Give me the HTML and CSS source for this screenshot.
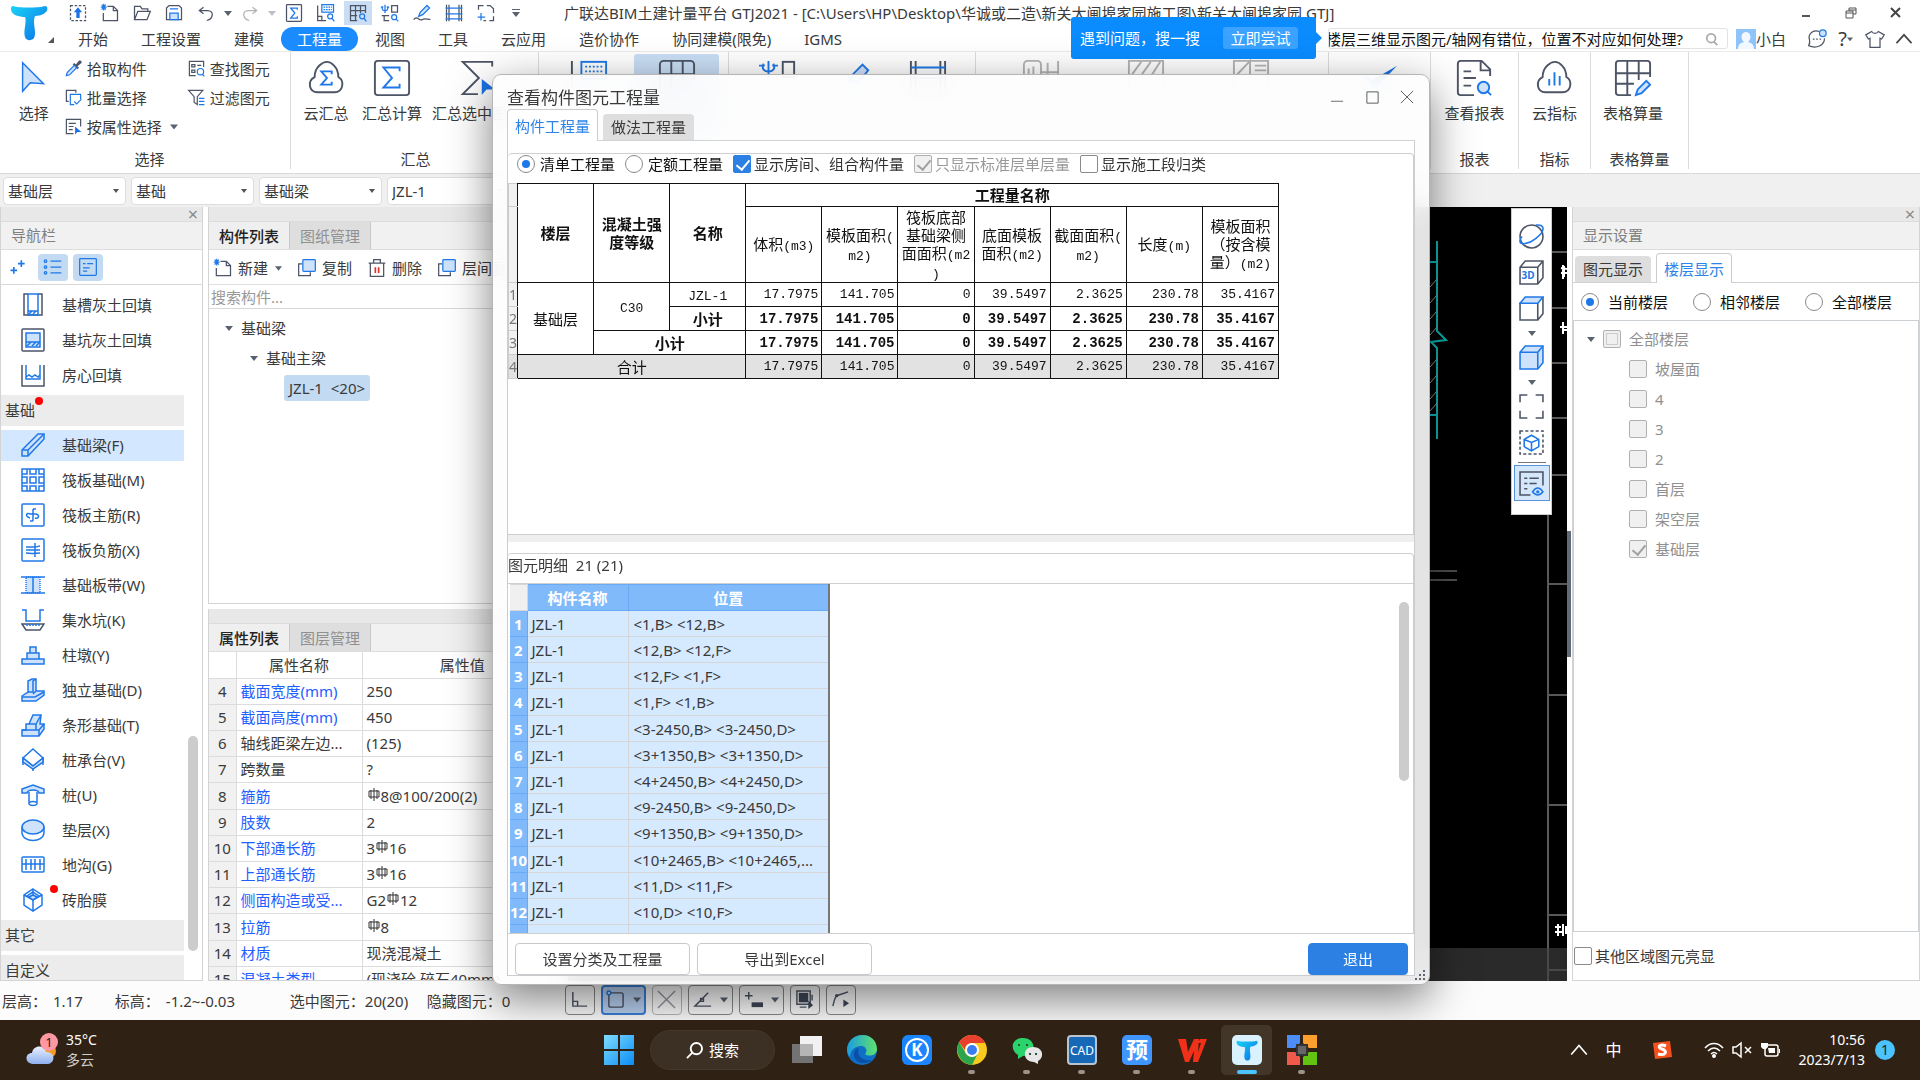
FILE: index.html
```html
<!DOCTYPE html>
<html lang="zh-CN">
<head>
<meta charset="utf-8">
<title>广联达BIM土建计量平台 GTJ2021</title>
<link rel="stylesheet" href="styles.css">
</head>
<body>
<svg class="defs" aria-hidden="true">
  <defs>
    <linearGradient id="gT" x1="0" y1="0" x2="1" y2="1"><stop offset="0" stop-color="#19d3f5"/><stop offset="1" stop-color="#0a6fe8"/></linearGradient>
    <linearGradient id="gWin" x1="0" y1="0" x2="1" y2="1"><stop offset="0" stop-color="#7fdcff"/><stop offset="1" stop-color="#0a8cf5"/></linearGradient>
    <linearGradient id="gEdge" x1="0" y1="0" x2="1" y2="0"><stop offset="0" stop-color="#1b9de2"/><stop offset="1" stop-color="#5fe26a"/></linearGradient>
    <linearGradient id="gCloud" x1="0" y1="0" x2="0" y2="1"><stop offset="0" stop-color="#eaf1ff"/><stop offset="1" stop-color="#8fb0ef"/></linearGradient>
  </defs>
  <symbol id="tlogo" viewBox="0 0 38 38"><path d="M3 3c5 2 26 2 32 0 3 0 3 4 1 6-3 3-8 4-11 4-3 6 2 17-1 22-2 3-8 3-9-1-2-6 2-15 0-20C9 14 2 12 1 7c0-2 0-4 2-4z" fill="url(#gT)"/></symbol>
  <symbol id="down" viewBox="0 0 8 8"><path d="M0 2h8L4 7z" fill="#5a6270"/></symbol>
  <symbol id="downbar" viewBox="0 0 8 10"><path d="M0 1h8v1H0zM0 4h8L4 9z" fill="#5a6270"/></symbol>
  <symbol id="upload" viewBox="0 0 24 24"><rect class="d" x="3" y="3" width="18" height="18" stroke-dasharray="3 2"/><path class="bf" d="M12 5l5 6h-3v7h-4v-7H7z"/></symbol>
  <symbol id="newfile" viewBox="0 0 24 24"><path class="d" d="M9 4h7l5 5v12H4v-9"/><path class="d" d="M16 4v5h5"/><path class="b" d="M2 2l5 6M7 2L2 8M1 5h7M4.500 1v8"/></symbol>
  <symbol id="folder" viewBox="0 0 24 24"><path class="d" d="M3 20V4h7l2 3h7v3M3 20l4-10h15l-4 10z"/></symbol>
  <symbol id="save" viewBox="0 0 24 24"><path class="d" d="M3 6l3-3h12l3 3v14H3z"/><path class="b l" d="M7 20v-8h10v8zM7 7h10"/></symbol>
  <symbol id="undo" viewBox="0 0 24 24"><path class="d" d="M9 5L4 9l5 4M4 9h10c8 0 7 10-1 12"/></symbol>
  <symbol id="redo" viewBox="0 0 24 24"><path class="g" d="M15 5l5 4-5 4M20 9H10C2 9 3 19 11 21"/></symbol>
  <symbol id="sigma" viewBox="0 0 24 24"><rect class="d" x="3" y="2" width="18" height="20" rx="1"/><path class="b" d="M16 8V6H8l5 6-5 6h8v-2"/></symbol>
  <symbol id="calcview" viewBox="0 0 24 24"><path class="d" d="M2 3v18h10M2 16h5v5"/><rect class="b" x="7" y="2" width="14" height="9"/><path class="b" d="M9 5h10M9 8h10" stroke-dasharray="2 1"/><circle class="b" cx="17" cy="16" r="3"/><path class="b" d="M19 18l3 4"/></symbol>
  <symbol id="gridview" viewBox="0 0 24 24"><path class="d" d="M3 7V3h18v9M3 7v14h8M3 9h18M3 15h8M9 3v18M15 3v9"/><circle class="b" cx="17" cy="16" r="3"/><path class="b" d="M19 18l3 4"/></symbol>
  <symbol id="rebarview" viewBox="0 0 24 24"><path class="b" d="M6 2v10M3 4c-3 7 9 7 6 0M1 5h3M8 5h3"/><path class="d" d="M14 11V3h7v8zM2 15h9M5 15v7M5 21h6"/><circle class="b" cx="17" cy="17" r="3"/><path class="b" d="M19 19l3 3"/></symbol>
  <symbol id="pen" viewBox="0 0 24 24"><path class="b l" d="M8 16l2-5 8-8 3 3-8 8z"/><path class="d" d="M2 20c4-6 6 2 10 0 3-2 6-1 10 0"/></symbol>
  <symbol id="ladder" viewBox="0 0 24 24"><path class="d" d="M3 2v20M21 2v20M6 2v20M18 2v20"/><path class="b" d="M2 6h20M2 13h20M2 19h20"/></symbol>
  <symbol id="pageadd" viewBox="0 0 24 24"><path class="d" d="M3 8V3h6M13 3h4l4 4v5M21 16v5h-5M12 21H9"/><path class="b" d="M6 12v9M2 17h9"/></symbol>
  <symbol id="cursor" viewBox="0 0 32 40"><path class="b l" stroke-width="2" d="M4 4v30l8-9 14 1z"/></symbol>
  <symbol id="picker" viewBox="0 0 24 24"><path fill="#4c5465" d="M13 5l2 2 4-5c3-1 4 2 3 3l-5 4 2 2-2 2-6-6z"/><path class="b l" d="M13 8l-9 9-1 4 4-1 9-9z"/></symbol>
  <symbol id="batch" viewBox="0 0 24 24"><path class="d" d="M6 17H3V3h12v3"/><path class="b" d="M21 14V8H8v13h5M13 17l3 3 6-6"/></symbol>
  <symbol id="attr" viewBox="0 0 24 24"><path class="d" d="M21 12V3H3v18h9M6 8h9M6 12h6M6 16h5"/><path class="bf" d="M14 12v10l3-3h5z"/></symbol>
  <symbol id="find" viewBox="0 0 24 24"><path class="d" d="M21 10V3H3v18h8M6 7h4v3H6zM13 8h5M6 14h4v3H6z"/><circle class="b" cx="17" cy="16" r="4"/><path class="b" d="M19 19l3 3"/></symbol>
  <symbol id="filter" viewBox="0 0 24 24"><path class="d" d="M2 3h18l-7 8v10l-4-3v-7z"/><path class="b" d="M15 13h7M15 17h7M15 21h7"/></symbol>
  <symbol id="cloudsum" viewBox="0 0 40 40"><path class="d w" d="M11 35c-9 0-11-12-3-16C8 8 17 3 21 3s12 5 12 16c7 4 5 16-4 16z"/><path class="b w" d="M26 16v-3H15l6 7-6 7h11v-3"/></symbol>
  <symbol id="cloudbars" viewBox="0 0 40 40"><path class="d w" d="M11 35c-9 0-11-12-3-16C8 8 17 3 21 3s12 5 12 16c7 4 5 16-4 16z"/><path class="b w" d="M15 21v7M20.500 14v14M26 18v10"/></symbol>
  <symbol id="sumcalc" viewBox="0 0 40 40"><rect class="d w" x="2" y="2" width="36" height="36" rx="3"/><path class="b w" d="M28 13V9H11l9 11-9 10h17v-4"/></symbol>
  <symbol id="sumsel" viewBox="0 0 40 40"><path class="d w" d="M36 8V3H5l17 17L5 37h16"/><path class="bf" d="M25 21v17l5-6h9z"/></symbol>
  <symbol id="report" viewBox="0 0 40 40"><path class="d w" d="M20 38H6a3 3 0 0 1-3-3V5a3 3 0 0 1 3-3h22l9 9v7M27 2v10h10M9 13h8M9 20h13M9 28h8"/><circle class="b w l" cx="30" cy="30" r="6"/><path class="b w" d="M34 34l4 4"/></symbol>
  <symbol id="tablepen" viewBox="0 0 40 40"><path class="d w" d="M18 38H5a3 3 0 0 1-3-3V5a3 3 0 0 1 3-3h30a3 3 0 0 1 3 3v14M2 15h36M2 26h19M14 2v36M26 2v20"/><path class="b w l" d="M23 38l2-6 9-9 4 4-9 9z"/></symbol>
  <symbol id="kbig" viewBox="0 0 40 40"><path class="d w" d="M2 2v36h16"/><rect class="b w" x="12" y="3" width="26" height="18"/><path class="b w" d="M16 8h19M16 13h19M16 18h19" stroke-dasharray="2 2"/></symbol>
  <symbol id="gbig" viewBox="0 0 40 40"><path class="d w" d="M38 22V6a4 4 0 0 0-4-4H6a4 4 0 0 0-4 4v32M2 16h36M14 2v36M26 2v20"/></symbol>
  <symbol id="rbig" viewBox="0 0 40 40"><path class="b w" d="M10 2v18M5 5c-6 11 16 11 10 0M0 7h6M14 7h6"/><rect class="d w" x="25" y="3" width="12" height="16"/></symbol>
  <symbol id="pbig" viewBox="0 0 40 40"><path class="b w l" d="M16 24l4-8 10-10 6 6-10 12z"/></symbol>
  <symbol id="lbig" viewBox="0 0 40 40"><path class="d w" d="M2 2v36M38 2v36M7 2v36M33 2v36"/><path class="b w" d="M2 9h36M2 20h36"/></symbol>
  <symbol id="grey1" viewBox="0 0 40 40"><path class="g w" d="M2 20V6a4 4 0 0 1 4-4h10a4 4 0 0 1 4 4v14M7 20V10M12 20V8M20 14h18M27 4v16M38 2v18"/></symbol>
  <symbol id="grey2" viewBox="0 0 40 40"><path class="g w" d="M2 38V2h36v36M4 18L15 3M13 20L25 3M24 20L35 3"/></symbol>
  <symbol id="grey3" viewBox="0 0 40 40"><path class="g w" d="M2 38V2h36v36M2 20L19 2v18M24 7h12M24 12h12M24 17h12"/></symbol>
  <symbol id="check" viewBox="0 0 40 40"><path class="bf" d="M4 18l8 4L38 7 14 32z"/></symbol>
  <symbol id="sparkle" viewBox="0 0 24 24"><path class="b w" d="M16 4v8M12 8h8M7 12v8M3 16h8"/></symbol>
  <symbol id="list" viewBox="0 0 24 24"><path class="b" d="M9 5h13M9 12h13M9 19h13"/><circle class="b" cx="3" cy="5" r="1.500"/><circle class="b" cx="3" cy="12" r="1.500"/><circle class="b" cx="3" cy="19" r="1.500"/></symbol>
  <symbol id="card" viewBox="0 0 24 24"><rect class="b" x="2" y="2" width="20" height="20" rx="1"/><path class="b" d="M6 8h3M11 8h7M6 13h8M6 17h5"/></symbol>
  <symbol id="copy" viewBox="0 0 24 24"><path class="d" d="M6 7H2v14h14v-4"/><rect class="b l" x="7" y="2" width="15" height="14" rx="1"/></symbol>
  <symbol id="trash" viewBox="0 0 24 24"><path class="d" d="M2 6h20M8 6V2h8v4M4 6v16h16V6"/><path d="M10 11v7M14 11v7" stroke="#e03030" stroke-width="2"/></symbol>
  <symbol id="n1" viewBox="0 0 24 24"><path class="d" d="M7 1H3v21h18V1h-4"/><path class="b" d="M7 1h10v21H7z"/><path class="b" d="M7 18h10M8 21l3-3M12 21l3-3"/></symbol>
  <symbol id="n2" viewBox="0 0 24 24"><rect class="d" x="1" y="1" width="22" height="22" rx="1"/><path class="b l" d="M5 5h14v14H5z"/><path class="b" d="M5 14h14M6 18l4-4M11 18l4-4M15 18l4-4"/></symbol>
  <symbol id="n3" viewBox="0 0 24 24"><path class="d" d="M1 2v21h22V2"/><path class="b" d="M5 2v14h14V2"/><path class="b" d="M5 14l3-2 3 2 3-2 3 2 2-2"/></symbol>
  <symbol id="n4" viewBox="0 0 24 24"><path class="b l" d="M1 17L17 1h6v5L7 23H1z"/><path class="b" d="M1 17h6v6M7 17L23 1"/></symbol>
  <symbol id="n5" viewBox="0 0 24 24"><path class="b" d="M1 1h22v22H1zM6 1v5H1M9 1v5h6V1M18 1v5h5M1 9h5v6H1M9 9h6v6H9zM23 9h-5v6h5M1 18h5v5M9 23v-5h6v5M18 23v-5h5"/></symbol>
  <symbol id="n6" viewBox="0 0 24 24"><rect class="b" x="1" y="1" width="22" height="22" rx="1"/><path class="b" d="M12 6v12M9 18h3M9 15c-6-2-3-6 0-4h6c4 1 3 5-1 4M12 6h3"/></symbol>
  <symbol id="n7" viewBox="0 0 24 24"><rect class="b" x="1" y="1" width="22" height="22" rx="1"/><path class="b" d="M5 9h9c3 0 3-1 5-1M5 12h14M5 15c4 0 6 1 14 0M14 5v14"/></symbol>
  <symbol id="n8" viewBox="0 0 24 24"><path class="b l" d="M5 4h14v16H5z" stroke-dasharray="1 1"/><path class="b" d="M0 4h24M0 20h24M12 4v16"/></symbol>
  <symbol id="n9" viewBox="0 0 24 24"><path class="b" d="M1 2h4v11h14V2h4"/><path class="d" d="M1 16l4 6h14l4-6z"/><path class="b" d="M5 17h14" stroke-dasharray="2 1"/></symbol>
  <symbol id="n10" viewBox="0 0 24 24"><path class="b l" d="M9 4h6v6H9zM6 10h12v6H6zM1 16h22v5H1z"/></symbol>
  <symbol id="n11" viewBox="0 0 24 24"><path class="b l" d="M1 18l6-4V3l4-2h4v12h8v4l-8 6H1z"/><path class="b" d="M7 14h5V3l3-2M15 13l-3 3M1 19h13l9-5"/></symbol>
  <symbol id="n12" viewBox="0 0 24 24"><path class="b l" d="M1 17h4v-6h3l4-9h8l-1 9h4v5l-5 7H1z"/><path class="b" d="M1 17h17v6M5 17h10v-6H8M15 11l5-9M18 17l5-6"/></symbol>
  <symbol id="n13" viewBox="0 0 24 24"><path class="b" d="M12 1l10 9-10 8-10-8zM2 10v7M22 10v7M12 18v5"/><path class="b l" d="M2 10l10 8 10-8v4l-10 7-10-7z"/></symbol>
  <symbol id="n14" viewBox="0 0 24 24"><path class="b l" d="M1 6l11-4 11 4v4h-5c-1-4-11-4-12 0H1z"/><path class="b" d="M8 9v12c1 2 7 2 8 0V9M8 20c1-2 7-2 8 0"/></symbol>
  <symbol id="n15" viewBox="0 0 24 24"><ellipse class="b l" cx="12" cy="9" rx="11" ry="7"/><path class="b" d="M1 9v6c1 10 21 10 22 0V9"/></symbol>
  <symbol id="n16" viewBox="0 0 24 24"><rect class="b" x="1" y="4" width="22" height="15" rx="1"/><path class="b" d="M1 11h22M5 6v11M10 6v11M14 6v11M19 6v11"/></symbol>
  <symbol id="n17" viewBox="0 0 24 24"><path class="b" d="M12 1l9 6v10l-9 6-9-6V7zM12 12v11"/><path class="b l" d="M12 4l6 4-6 4-6-4z"/><path class="b" d="M3 7l9 5 9-5M12 1v6l-4 2M12 7l4 2"/></symbol>
  <symbol id="rebar" viewBox="0 0 14 14"><path d="M7 0v13M4 2v9M10 2v9M2 3h10v6H2z" fill="none" stroke="#333"/></symbol>
  <symbol id="orbit" viewBox="0 0 24 24"><circle class="d" cx="12" cy="12" r="11"/><path class="b" d="M16 1c10-1 9 6 0 13-6 5-16 7-15 2 0-2 1-3 2-4"/></symbol>
  <symbol id="cube" viewBox="0 0 24 24"><path class="d" d="M1 7l5-6h17v16l-5 6H1zM1 7h17v16M18 7l5-6"/></symbol>
  <symbol id="cubetop" viewBox="0 0 24 24"><path class="d" d="M1 7h17v16H1zM18 23l5-6V1"/><path class="b l" d="M1 7l5-6h17l-5 6z"/></symbol>
  <symbol id="cubeblue" viewBox="0 0 24 24"><path class="b l" d="M1 7l5-6h17v16l-5 6H1z"/><path class="b" d="M1 7h17v16M18 7l5-6"/></symbol>
  <symbol id="bracket" viewBox="0 0 24 24"><path class="d" d="M1 8V1h7M16 1h7v7M23 16v7h-7M8 23H1v-7"/></symbol>
  <symbol id="dashcube" viewBox="0 0 24 24"><rect class="d" x="1" y="1" width="22" height="22" stroke-dasharray="3 2"/><path class="b" d="M12 5l7 4v7l-7 4-7-4V9zM5 9l7 3 7-3M12 12v8"/></symbol>
  <symbol id="listeye" viewBox="0 0 24 24"><path class="d" d="M23 14V1H1v22h10M5 7h3M10 7h9M5 12h3M10 12h7M5 17h3"/><path class="b" d="M13 20c3-5 7-5 10 0-3 4-7 4-10 0z"/><circle class="bf" cx="18" cy="20" r="1.500"/></symbol>
</svg>

<div class="app">
  <header class="head">
    <a class="logo" href="#"><svg width="38" height="38"><use href="#tlogo"/></svg><i></i></a>
    <div class="head-main">
      <div class="titlebar">
        <button class="q"><svg><use href="#upload"/></svg></button>
        <button class="q"><svg><use href="#newfile"/></svg></button>
        <button class="q"><svg><use href="#folder"/></svg></button>
        <button class="q"><svg><use href="#save"/></svg></button>
        <button class="q"><svg><use href="#undo"/></svg></button>
        <button class="qd"><svg><use href="#down"/></svg></button>
        <button class="q"><svg><use href="#redo"/></svg></button>
        <button class="qd pale"><svg><use href="#down"/></svg></button>
        <button class="q"><svg><use href="#sigma"/></svg></button>
        <button class="q"><svg><use href="#calcview"/></svg></button>
        <button class="q on"><svg><use href="#gridview"/></svg></button>
        <button class="q"><svg><use href="#rebarview"/></svg></button>
        <button class="q"><svg><use href="#pen"/></svg></button>
        <button class="q"><svg><use href="#ladder"/></svg></button>
        <button class="q"><svg><use href="#pageadd"/></svg></button>
        <button class="qd more"><svg><use href="#downbar"/></svg></button>
        <h1>广联达BIM土建计量平台 GTJ2021 - [C:\Users\HP\Desktop\华诚或二造\新关大闸埠家园施工图\新关大闸埠家园.GTJ]</h1>
        <div class="winbtns">
          <button><svg viewBox="0 0 14 14"><path d="M3 9h8v2H3z" fill="#555"/></svg></button>
          <button><svg viewBox="0 0 14 14"><path d="M2 5h7v7H2zM2 7h7M5 5V2h7v6H9M5 4h7" fill="none" stroke="#555"/></svg></button>
          <button><svg viewBox="0 0 14 14"><path d="M2 2l9 9M11 2l-9 9" stroke="#444" stroke-width="2"/></svg></button>
        </div>
      </div>
      <nav class="menu">
        <a href="#">开始</a><a href="#">工程设置</a><a href="#">建模</a><a href="#" class="on">工程量</a><a href="#">视图</a><a href="#">工具</a><a href="#">云应用</a><a href="#">造价协作</a><a href="#">协同建模(限免)</a><a href="#">IGMS</a>
        <div class="menu-right">
          <label class="ask"><input type="text" aria-label="搜索问题" value="楼层三维显示图元/轴网有错位，位置不对应如何处理?"><svg viewBox="0 0 16 16"><circle cx="7" cy="7" r="5" fill="none" stroke="#aaa" stroke-width="2"/><path d="M10 11l4 4" stroke="#aaa" stroke-width="2"/></svg></label>
          <svg class="avatar" viewBox="0 0 20 20"><rect width="20" height="20" fill="#8fc4fb"/><path d="M2 20c0-5 3-6 6-7-4-3-3-10 2-10s6 7 2 10c3 1 6 2 6 7z" fill="#f2f8ff"/></svg>
          <span class="user">小白</span>
          <button class="mi"><svg viewBox="0 0 24 24"><path class="d" d="M15 3C6 0 1 7 3 13c1 3 0 5-1 7 9 4 19 0 19-9"/><circle class="b l" cx="19" cy="5" r="4"/><path class="d" d="M7 12h2M11 12h2M15 12h2" stroke-width="2"/></svg></button>
          <button class="mi help">?<svg class="tiny"><use href="#down"/></svg></button>
          <button class="mi"><svg viewBox="0 0 24 24"><path class="d" d="M8 3L1 7l3 5 2-1v11h12V11l2 1 3-5-7-4c-2 3-6 3-8 0z"/></svg></button>
          <button class="mi"><svg viewBox="0 0 24 24"><path d="M3 17l9-10 9 10" fill="none" stroke="#444" stroke-width="2"/></svg></button>
        </div>
      </nav>
    </div>
    <div class="tip"><span>遇到问题，搜一搜</span><button>立即尝试</button></div>
  </header>

  <section class="ribbon">
    <div class="grp g-select">
      <div class="tools">
        <button class="big"><svg><use href="#cursor"/></svg>选择</button>
        <div class="stack"><button><svg><use href="#picker"/></svg>拾取构件</button><button><svg><use href="#batch"/></svg>批量选择</button><button><svg><use href="#attr"/></svg>按属性选择<svg class="tiny"><use href="#down"/></svg></button></div>
        <div class="stack"><button><svg><use href="#find"/></svg>查找图元</button><button><svg><use href="#filter"/></svg>过滤图元</button></div>
      </div>
      <footer>选择</footer>
    </div>
    <div class="grp g-sum">
      <div class="tools"><button class="big"><svg><use href="#cloudsum"/></svg>云汇总</button><button class="big"><svg><use href="#sumcalc"/></svg>汇总计算</button><button class="big"><svg><use href="#sumsel"/></svg>汇总选中图元</button></div>
      <footer>汇总</footer>
    </div>
    <div class="grp g-a"><div class="tools"><button class="big"><svg><use href="#kbig"/></svg></button><button class="big on"><svg><use href="#gbig"/></svg></button></div></div>
    <div class="grp g-b"><div class="tools"><button class="big"><svg><use href="#rbig"/></svg></button><button class="big"><svg><use href="#pbig"/></svg></button><button class="big"><svg><use href="#lbig"/></svg></button></div></div>
    <div class="grp g-c"><div class="tools"><button class="big"><svg><use href="#grey1"/></svg></button><button class="big"><svg><use href="#grey2"/></svg></button><button class="big"><svg><use href="#grey3"/></svg></button></div></div>
    <div class="grp g-d"><div class="tools"><button class="big"><svg><use href="#check"/></svg></button></div></div>
    <div class="grp g-e"><div class="tools"><button class="big"><svg><use href="#report"/></svg>查看报表</button></div><footer>报表</footer></div>
    <div class="grp g-f"><div class="tools"><button class="big"><svg><use href="#cloudbars"/></svg>云指标</button></div><footer>指标</footer></div>
    <div class="grp g-g"><div class="tools"><button class="big"><svg><use href="#tablepen"/></svg>表格算量</button></div><footer>表格算量</footer></div>
  </section>

  <section class="combos">
    <select aria-label="楼层"><option>基础层</option></select>
    <select aria-label="类别"><option>基础</option></select>
    <select aria-label="构件类型"><option>基础梁</option></select>
    <select aria-label="构件"><option>JZL-1</option></select>
  </section>

  <main class="work">
    <aside class="panel nav">
      <div class="strip"><button aria-label="关闭">×</button></div>
      <h2>导航栏</h2>
      <div class="navtools"><button><svg><use href="#sparkle"/></svg></button><button class="on"><svg><use href="#list"/></svg></button><button class="on"><svg><use href="#card"/></svg></button></div>
      <div class="navlist">
        <a href="#"><svg><use href="#n1"/></svg>基槽灰土回填</a>
        <a href="#"><svg><use href="#n2"/></svg>基坑灰土回填</a>
        <a href="#"><svg><use href="#n3"/></svg>房心回填</a>
        <h3>基础<i class="dot"></i></h3>
        <a href="#" class="on"><svg><use href="#n4"/></svg>基础梁(F)</a>
        <a href="#"><svg><use href="#n5"/></svg>筏板基础(M)</a>
        <a href="#"><svg><use href="#n6"/></svg>筏板主筋(R)</a>
        <a href="#"><svg><use href="#n7"/></svg>筏板负筋(X)</a>
        <a href="#"><svg><use href="#n8"/></svg>基础板带(W)</a>
        <a href="#"><svg><use href="#n9"/></svg>集水坑(K)</a>
        <a href="#"><svg><use href="#n10"/></svg>柱墩(Y)</a>
        <a href="#"><svg><use href="#n11"/></svg>独立基础(D)</a>
        <a href="#"><svg><use href="#n12"/></svg>条形基础(T)</a>
        <a href="#"><svg><use href="#n13"/></svg>桩承台(V)</a>
        <a href="#"><svg><use href="#n14"/></svg>桩(U)</a>
        <a href="#"><svg><use href="#n15"/></svg>垫层(X)</a>
        <a href="#"><svg><use href="#n16"/></svg>地沟(G)</a>
        <a href="#" class="new"><svg><use href="#n17"/></svg><i class="dot"></i>砖胎膜</a>
        <h3>其它</h3>
        <h3>自定义</h3>
        <div class="thumb"></div>
      </div>
    </aside>

    <div class="mid">
      <section class="panel comp">
        <div class="strip"></div>
        <div class="tabs"><button class="on">构件列表</button><button>图纸管理</button></div>
        <div class="comptools"><button><svg><use href="#newfile"/></svg>新建<svg class="tiny"><use href="#down"/></svg></button><button><svg><use href="#copy"/></svg>复制</button><button><svg><use href="#trash"/></svg>删除</button><button><svg><use href="#copy"/></svg>层间复制</button></div>
        <input class="find" type="text" aria-label="搜索构件" placeholder="搜索构件...">
        <ul class="tree"><li class="t1"><svg class="tiny"><use href="#down"/></svg>基础梁</li><li class="t2"><svg class="tiny"><use href="#down"/></svg>基础主梁</li><li class="t3"><span>JZL-1&nbsp; &lt;20&gt;</span></li></ul>
      </section>
      <section class="panel prop">
        <div class="strip"></div>
        <div class="tabs"><button class="on">属性列表</button><button>图层管理</button></div>
        <div class="propwrap">
        <table>
          <colgroup><col class="c1"><col class="c2"><col></colgroup>
          <thead><tr><th></th><th>属性名称</th><th>属性值</th></tr></thead>
          <tbody>
          <tr><th>4</th><td class="k">截面宽度(mm)</td><td>250</td></tr>
          <tr><th>5</th><td class="k">截面高度(mm)</td><td>450</td></tr>
          <tr><th>6</th><td>轴线距梁左边...</td><td>(125)</td></tr>
          <tr><th>7</th><td>跨数量</td><td>?</td></tr>
          <tr><th>8</th><td class="k">箍筋</td><td><svg><use href="#rebar"/></svg>8@100/200(2)</td></tr>
          <tr><th>9</th><td class="k">肢数</td><td>2</td></tr>
          <tr><th>10</th><td class="k">下部通长筋</td><td>3<svg><use href="#rebar"/></svg>16</td></tr>
          <tr><th>11</th><td class="k">上部通长筋</td><td>3<svg><use href="#rebar"/></svg>16</td></tr>
          <tr><th>12</th><td class="k">侧面构造或受...</td><td>G2<svg><use href="#rebar"/></svg>12</td></tr>
          <tr><th>13</th><td class="k">拉筋</td><td><svg><use href="#rebar"/></svg>8</td></tr>
          <tr><th>14</th><td class="k">材质</td><td>现浇混凝土</td></tr>
          <tr><th>15</th><td class="k">混凝土类型</td><td>(现浇砼 碎石40mm)</td></tr>
          </tbody>
        </table>
        </div>
      </section>
    </div>

    <section class="canvas">
      <svg class="drawing" viewBox="0 0 137 774" preserveAspectRatio="xMaxYMin meet">
        <path d="M7 34v90l9 9-15 2 6 6v91M0 55h7M0 208h7" fill="none" stroke="#0bb5b5" stroke-width="2"/>
        <path d="M0 80l7-8M0 96l7-8M0 112l7-8M0 128l7-8M0 160l7-8M0 176l7-8M0 192l7-8M0 204l7-8M0 364h27M0 373h27" stroke="#999"/>
        <path d="M118 307v467M122 45h15M122 101h15M122 156h15M122 211h15M122 268h15M119 377h18M119 488h18M119 598h18M119 708h18M119 763h18" stroke="#b0b0b0"/>
        <path d="M133 58v14M131 61l6 1M131 66h6M134 59v11M133 115v12M130 120h7M132 123h5M125 720h6M128 717v12M125 725h7M133 717v12M136 719v8" stroke="#fff" stroke-width="2"/>
      </svg>
      <div class="cmdline"></div>
      <div class="viewbar">
        <button><svg><use href="#orbit"/></svg></button>
        <button class="v3d"><svg><use href="#cube"/></svg><b>3D</b></button>
        <button><svg><use href="#cubetop"/></svg></button>
        <svg class="tiny"><use href="#down"/></svg>
        <button><svg><use href="#cubeblue"/></svg></button>
        <svg class="tiny"><use href="#down"/></svg>
        <button><svg><use href="#bracket"/></svg></button>
        <button><svg><use href="#dashcube"/></svg></button>
        <hr>
        <button class="on"><svg><use href="#listeye"/></svg></button>
      </div>
    </section>
    <div class="splitter"><i></i></div>

    <aside class="panel disp">
      <div class="strip"><button aria-label="关闭">×</button></div>
      <h2>显示设置</h2>
      <div class="ptabs"><button>图元显示</button><button class="on">楼层显示</button></div>
      <div class="floors"><label><input type="radio" name="fl" checked>当前楼层</label><label><input type="radio" name="fl">相邻楼层</label><label><input type="radio" name="fl">全部楼层</label></div>
      <div class="ftree">
        <label class="root"><svg class="tiny"><use href="#down"/></svg><input type="checkbox" class="part" disabled>全部楼层</label>
        <label><input type="checkbox" disabled>坡屋面</label>
        <label><input type="checkbox" disabled>4</label>
        <label><input type="checkbox" disabled>3</label>
        <label><input type="checkbox" disabled>2</label>
        <label><input type="checkbox" disabled>首层</label>
        <label><input type="checkbox" disabled>架空层</label>
        <label><input type="checkbox" disabled checked>基础层</label>
      </div>
      <label class="other"><input type="checkbox">其他区域图元亮显</label>
    </aside>
  </main>

  <footer class="status">
    <span>层高：</span><span class="v1">1.17</span><span>标高：</span><span class="v2">-1.2~-0.03</span><span>选中图元：</span><span class="v3">20(20)</span><span>隐藏图元：</span><span class="v4">0</span>
    <div class="snap">
      <button><svg viewBox="0 0 20 20"><path class="d" d="M3 2v15h15M3 12h5v5"/></svg></button>
      <button class="w on"><svg viewBox="0 0 20 20"><rect class="d" x="3" y="3" width="15" height="15" rx="2"/><circle class="b l" cx="3" cy="3" r="2"/></svg><svg class="tiny"><use href="#down"/></svg></button>
      <button class="off"><svg viewBox="0 0 20 20"><path class="d" d="M1 1l18 18M19 1L1 19"/></svg></button>
      <button class="w"><svg viewBox="0 0 20 20"><path class="d" d="M16 3L2 17h17M8 9h3v3H8z"/></svg><svg class="tiny"><use href="#down"/></svg></button>
      <button class="w"><svg viewBox="0 0 20 20"><path class="d" d="M5 2v8M1 6h8"/><path fill="#3f4758" d="M8 13h12v5H8z"/></svg><svg class="tiny"><use href="#down"/></svg></button>
      <button><svg viewBox="0 0 20 20"><rect x="4" y="3" width="10" height="10" fill="#3f4758"/><path class="d" d="M2 1h14v14H2zM5 18h7M18 5v6"/><path d="M14 11v9l5-4z" fill="#3f4758"/></svg></button>
      <button><svg viewBox="0 0 20 20"><path class="d" d="M2 17C3 12 4 8 6 6l12-4"/><circle class="d" cx="6" cy="6" r="1"/><path d="M13 10v8l6-4z" fill="#3f4758"/></svg></button>
    </div>
  </footer>

  <section class="dialog" role="dialog" aria-label="查看构件图元工程量">
    <div class="dtitle"><h2>查看构件图元工程量</h2>
      <button><svg viewBox="0 0 16 16"><path d="M1 12h13" stroke="#666"/></svg></button><button><svg viewBox="0 0 16 16"><path d="M2 2h12v12H2z" fill="none" stroke="#555"/></svg></button><button><svg viewBox="0 0 16 16"><path d="M1 1l13 13M14 1L1 14" stroke="#555"/></svg></button>
    </div>
    <div class="dtabs ptabs"><button class="on">构件工程量</button><button>做法工程量</button></div>
    <div class="dbody">
      <div class="qty">
        <div class="opts"><label><input type="radio" name="q" checked>清单工程量</label><label><input type="radio" name="q">定额工程量</label><label class="t"><input type="checkbox" checked>显示房间、组合构件量</label><label class="t dis"><input type="checkbox" checked disabled>只显示标准层单层量</label><label class="t"><input type="checkbox">显示施工段归类</label></div>
        <table class="qt">
          <colgroup><col class="gut"><col><col><col><col><col><col><col><col><col><col></colgroup>
          <tr class="r1"><td class="no"></td><th rowspan="2">楼层</th><th rowspan="2">混凝土强<br>度等级</th><th rowspan="2">名称</th><th colspan="7">工程量名称</th></tr>
          <tr class="r2"><td class="no"></td><td>体积<s>(m3)</s></td><td>模板面积<s>(<br>m2)</s></td><td>筏板底部<br>基础梁侧<br>面面积<s>(m2<br>)</s></td><td>底面模板<br>面积<s>(m2)</s></td><td>截面面积<s>(<br>m2)</s></td><td>长度<s>(m)</s></td><td>模板面积<br>（按含模<br>量）<s>(m2)</s></td></tr>
          <tr><td class="no">1</td><td rowspan="3">基础层</td><td rowspan="2"><s>C30</s></td><td><s>JZL-1</s></td><td class="n">17.7975</td><td class="n">141.705</td><td class="n">0</td><td class="n">39.5497</td><td class="n">2.3625</td><td class="n">230.78</td><td class="n">35.4167</td></tr>
          <tr class="bold"><td class="no">2</td><td>小计</td><td class="n">17.7975</td><td class="n">141.705</td><td class="n">0</td><td class="n">39.5497</td><td class="n">2.3625</td><td class="n">230.78</td><td class="n">35.4167</td></tr>
          <tr class="bold"><td class="no">3</td><td colspan="2">小计</td><td class="n">17.7975</td><td class="n">141.705</td><td class="n">0</td><td class="n">39.5497</td><td class="n">2.3625</td><td class="n">230.78</td><td class="n">35.4167</td></tr>
          <tr class="sum"><td class="no">4</td><td colspan="3">合计</td><td class="n">17.7975</td><td class="n">141.705</td><td class="n">0</td><td class="n">39.5497</td><td class="n">2.3625</td><td class="n">230.78</td><td class="n">35.4167</td></tr>
        </table>
      </div>
      <div class="dsplit"></div>
      <div class="detail">
        <h3>图元明细&nbsp; 21 (21)</h3>
        <div class="dwrap">
          <table class="dt">
            <colgroup><col class="a"><col class="b1"><col class="c"></colgroup>
            <tr class="hd"><td></td><th>构件名称</th><th>位置</th></tr>
            <tr><th>1</th><td>JZL-1</td><td>&lt;1,B&gt; &lt;12,B&gt;</td></tr>
            <tr><th>2</th><td>JZL-1</td><td>&lt;12,B&gt; &lt;12,F&gt;</td></tr>
            <tr><th>3</th><td>JZL-1</td><td>&lt;12,F&gt; &lt;1,F&gt;</td></tr>
            <tr><th>4</th><td>JZL-1</td><td>&lt;1,F&gt; &lt;1,B&gt;</td></tr>
            <tr><th>5</th><td>JZL-1</td><td>&lt;3-2450,B&gt; &lt;3-2450,D&gt;</td></tr>
            <tr><th>6</th><td>JZL-1</td><td>&lt;3+1350,B&gt; &lt;3+1350,D&gt;</td></tr>
            <tr><th>7</th><td>JZL-1</td><td>&lt;4+2450,B&gt; &lt;4+2450,D&gt;</td></tr>
            <tr><th>8</th><td>JZL-1</td><td>&lt;9-2450,B&gt; &lt;9-2450,D&gt;</td></tr>
            <tr><th>9</th><td>JZL-1</td><td>&lt;9+1350,B&gt; &lt;9+1350,D&gt;</td></tr>
            <tr><th>10</th><td>JZL-1</td><td>&lt;10+2465,B&gt; &lt;10+2465,...</td></tr>
            <tr><th>11</th><td>JZL-1</td><td>&lt;11,D&gt; &lt;11,F&gt;</td></tr>
            <tr><th>12</th><td>JZL-1</td><td>&lt;10,D&gt; &lt;10,F&gt;</td></tr>
            <tr><th></th><td></td><td></td></tr>
          </table>
          <div class="thumb"></div>
        </div>
      </div>
      <div class="dfoot"><button>设置分类及工程量</button><button>导出到Excel</button><button class="pri">退出</button></div>
    </div>
    <svg class="grip" viewBox="0 0 12 12"><path d="M8 0h2v2H8zM4 4h2v2H4zM8 4h2v2H8zM0 8h2v2H0zM4 8h2v2H4zM8 8h2v2H8z" fill="#5d6675"/></svg>
  </section>

  <footer class="taskbar">
    <div class="weather">
      <svg viewBox="0 0 34 34"><circle cx="24" cy="18" r="7" fill="#f59a1e"/><path d="M8 31c-9-1-8-11-1-11 1-8 12-9 14-1 9-1 10 11 2 12z" fill="url(#gCloud)"/><circle cx="24" cy="9" r="9" fill="#ff98a2"/><text x="24" y="14" text-anchor="middle" font-size="13" fill="#222">1</text></svg>
      <div>35°C<br><span>多云</span></div>
    </div>
    <div class="apps">
      <button class="app-b"><svg viewBox="0 0 30 30"><path d="M0 0h14v14H0zM16 0h14v14H16zM0 16h14v14H0zM16 16h14v14H16z" fill="url(#gWin)"/></svg></button>
      <button class="tsearch"><svg viewBox="0 0 18 18"><circle cx="11" cy="7" r="6" fill="none" stroke="#fff" stroke-width="2"/><path d="M7 11l-6 6" stroke="#fff" stroke-width="2"/></svg>搜索</button>
      <button class="app-b"><svg viewBox="0 0 30 30"><rect x="0" y="9" width="21" height="19" fill="#737373"/><rect x="8" y="1" width="22" height="20" fill="#f1f1f1"/><rect x="8" y="9" width="13" height="12" fill="#b5b5b5"/></svg></button>
      <button class="app-b"><svg viewBox="0 0 30 30"><circle cx="15" cy="15" r="15" fill="#0f6fc5"/><path d="M0 14C2-4 29-5 30 14c0 7-9 8-12 5 3-3 1-8-4-8-7 0-11 5-11 11-2-2-3-5-3-8z" fill="url(#gEdge)"/><path d="M12 13c-3 6 2 14 13 12-6 6-19 3-18-6 0-4 3-6 5-6z" fill="#0a4fa8"/></svg></button>
      <button class="app-b"><svg viewBox="0 0 30 30"><rect width="30" height="30" rx="6" fill="#1a85ff"/><circle cx="15" cy="15" r="11" fill="none" stroke="#fff" stroke-width="2"/><text x="15" y="21" text-anchor="middle" font-size="17" font-weight="700" fill="#fff">K</text></svg></button>
      <button class="app-b run"><svg viewBox="0 0 30 30"><circle cx="15" cy="15" r="15" fill="#f9c91d"/><path d="M2 7C9-3 24-2 28 8H15c-4 0-7 3-7 7z" fill="#e8402f"/><path d="M2 7c-5 9 1 22 13 23l6-12c-3 5-10 5-13-1z" fill="#2ca54c"/><circle cx="15" cy="15" r="7" fill="#fff"/><circle cx="15" cy="15" r="5" fill="#3a7df0"/></svg></button>
      <button class="app-b run"><svg viewBox="0 0 30 30"><path d="M11 3c14 0 14 18 0 18l-5 3v-4C-3 14 0 3 11 3z" fill="#2bd46a"/><path d="M21 12c10 0 12 10 5 14v3l-4-2c-12 0-12-15-1-15z" fill="#e6e6e6"/><path d="M7 9v2M15 9v2M18 18v2M24 18v2" stroke="#25543a" stroke-width="2"/></svg></button>
      <button class="app-b run"><svg viewBox="0 0 30 30"><rect x="1" y="1" width="28" height="28" rx="3" fill="#1769b8" stroke="#b9c4d0" stroke-width="2"/><text x="15" y="20" text-anchor="middle" font-size="12" fill="#fff">CAD</text></svg></button>
      <button class="app-b run"><svg viewBox="0 0 30 30"><rect width="30" height="30" rx="5" fill="#4096ff"/><text x="15" y="23" text-anchor="middle" font-size="22" font-weight="700" fill="#fff">预</text></svg></button>
      <button class="app-b run"><svg viewBox="0 0 30 30"><path d="M1 4h8l2 13L17 4h5l-1 13 3-9h-3l2-4h7l-9 23h-5l1-11-5 11H8z" fill="#f03018"/></svg></button>
      <button class="app-b cur"><svg viewBox="0 0 30 30"><rect width="30" height="30" rx="5" fill="#d9f2fd"/><use href="#tlogo" x="4" y="4" width="22" height="22"/></svg></button>
      <button class="app-b run"><svg viewBox="0 0 30 30"><path d="M0 0h13v8L8 13H0z" fill="#4d8df5"/><path d="M16 0h14v13h-8l-6-5z" fill="#ff9f2e"/><path d="M0 17h8l5 5v8H0z" fill="#f05a4a"/><path d="M22 17h8v13H16v-8z" fill="#62c411"/><rect x="9" y="9" width="12" height="12" fill="#333"/><rect x="11" y="11" width="8" height="8" fill="#666"/></svg></button>
    </div>
    <div class="tray">
      <svg viewBox="0 0 18 18"><path d="M2 13l7-8 7 8" fill="none" stroke="#fff" stroke-width="1.500"/></svg>
      <span class="ime">中</span>
      <svg class="sogou" viewBox="0 0 20 20"><path d="M1 3l17-2 2 16-17 2z" fill="#f4511e"/><path d="M14 6C7 3 5 8 10 9c6 2 4 7-4 5" fill="none" stroke="#fff" stroke-width="3"/></svg>
      <div class="sys">
      <svg viewBox="0 0 20 20"><path d="M1 8c5-6 13-6 18 0M4 11c4-4 8-4 12 0M7 14c2-2 4-2 6 0" fill="none" stroke="#fff" stroke-width="1.500"/><circle cx="10" cy="16" r="2" fill="#fff"/></svg>
      <svg viewBox="0 0 20 20"><path d="M1 7h3l5-4v14l-5-4H1zM13 7l6 6M19 7l-6 6" fill="none" stroke="#fff" stroke-width="1.500"/></svg>
      <svg viewBox="0 0 20 20"><rect x="5" y="5" width="13" height="11" rx="2" fill="none" stroke="#fff" stroke-width="1.500"/><path d="M8 8h7v5H9zM19 9h1v4h-1zM1 3h7v4L6 9H3L1 7z" fill="#fff"/></svg>
      </div>
      <div class="clock">10:56<br>2023/7/13</div>
      <b class="badge">1</b>
    </div>
  </footer>
</div>
</body>
</html>
```
FILE: styles.css
```css
* { box-sizing: border-box; }
body { margin: 0; font: 15px/20px "Noto Sans", "Noto Sans CJK SC", sans-serif; color: #3a3a3a; background: #fff; }
h1, h2, h3, ul, hr { margin: 0; padding: 0; font-weight: 400; font-size: 15px; list-style: none; }
button { font: inherit; color: inherit; background: none; border: 0; padding: 0; display: flex; align-items: center; justify-content: center; white-space: nowrap; }
input, select { font: inherit; color: inherit; margin: 0; }
a { color: inherit; text-decoration: none; }
s { text-decoration: none; font: 13px "Liberation Mono", monospace; }
svg { flex: none; }
.defs { position: absolute; width: 0; height: 0; }
.b, .d, .g { fill: none; stroke: #1f78e8; stroke-width: 1.5; }
.d { stroke: #4c5465; }
.g { stroke: #b4b4b4; }
.w { stroke-width: 2; }
.l { fill: #cfe2fb; }
.bf { fill: #1a73e8; }
.tiny { width: 8px; height: 8px; }

.app { position: relative; display: flex; flex-direction: column; height: 100vh; min-height: 800px; overflow: hidden; }

/* title bar and menu */
.head { position: relative; display: flex; height: 52px; border-bottom: 1px solid #ebebeb; background: #fff; }
.logo { display: flex; width: 62px; padding: 3px 0 0 10px; align-items: flex-start; }
.logo i { align-self: flex-end; margin-bottom: 8px; border: 3px solid transparent; border-right-color: #555; border-bottom-color: #555; }
.head-main { flex: 1; min-width: 0; }
.titlebar { display: flex; height: 26px; align-items: center; }
.q { width: 32px; height: 24px; }
.q svg { width: 20px; height: 20px; }
.q.on { width: 28px; margin: 0 2px; background: #c9def5; }
.qd { width: 12px; }
.qd svg { width: 8px; height: 8px; }
.qd.pale { opacity: .4; }
.qd.more { width: 28px; }
.qd.more svg { height: 10px; }
.titlebar h1 { margin-left: 34px; white-space: nowrap; }
.winbtns { display: flex; margin-left: auto; padding-right: 2px; }
.winbtns button { width: 45px; height: 24px; }
.winbtns svg { width: 14px; height: 14px; }
.menu { display: flex; height: 25px; align-items: center; gap: 1px; white-space: nowrap; }
.menu > a { padding: 2px 16px; border-radius: 12px; }
.menu > a.on { background: #1a8cff; color: #fff; }
.menu-right { display: flex; align-items: center; margin-left: auto; padding-right: 2px; }
.ask { display: flex; align-items: center; width: 400px; height: 21px; border: 1px solid #e2e2e2; border-radius: 3px; margin-right: 8px; }
.ask input { flex: 1; min-width: 0; border: 0; padding: 0; text-indent: -3px; color: #111; background: none; }
.ask svg { width: 14px; margin-right: 8px; }
.avatar { width: 20px; height: 20px; }
.user { margin-right: 16px; }
.mi { width: 29px; height: 24px; }
.mi svg { width: 20px; height: 20px; }
.mi .tiny { width: 6px; height: 6px; }
.help { font-size: 20px; }
.tip { position: absolute; z-index: 2; left: 1071px; top: 17px; display: flex; align-items: center; justify-content: space-between; width: 245px; height: 42px; padding: 0 18px 0 9px; background: #0a8cff; color: #fff; border-radius: 3px; }
.tip::after { content: ""; position: absolute; left: 100%; top: 15px; border: 6px solid transparent; border-left-color: #0a8cff; border-right: 0; }
.tip button { width: 75px; height: 22px; background: #3ba3ff; border-radius: 3px; }

/* ribbon */
.ribbon { display: flex; height: 122px; border-bottom: 1px solid #d9d9d9; background: #fff; }
.grp { position: relative; display: flex; flex: none; flex-direction: column; justify-content: space-between; padding: 2px 0 0; border-right: 1px solid #dcdcdc; margin-bottom: 4px; white-space: nowrap; }
.grp footer { text-align: center; }
.tools { display: flex; }
.big { flex-direction: column; justify-content: flex-start; gap: 6px; height: 80px; padding-top: 5px; overflow: hidden; }
.big svg { width: 38px; height: 38px; }
.stack { display: flex; flex-direction: column; gap: 8px; padding-top: 4px; }
.stack button { justify-content: flex-start; gap: 4px; height: 21px; }
.stack svg { width: 19px; height: 19px; }
.stack .tiny { width: 8px; margin-left: 4px; }
.g-select { width: 291px; padding-left: 13px; }
.g-select .big { width: 46px; }
.g-select .stack { width: 123px; padding-left: 9px; }
.g-select footer { margin-right: 4px; }
.g-sum { width: 248px; padding-left: 2px; }
.g-sum .big { width: 66px; }
.g-sum .big:nth-child(2) { margin: 0 2px 0 0; }
.g-sum .big:nth-child(3) { width: 100px; }
.g-a { width: 190px; padding-left: 20px; }
.g-a .big { width: 60px; }
.g-a .big.on { width: 85px; margin-left: 15px; background: #c9def5; border-radius: 3px; }
.g-b { width: 247px; padding-left: 20px; }
.g-b .big { width: 58px; margin-right: 18px; }
.g-c { width: 353px; padding-left: 35px; }
.g-c .big { width: 60px; margin-right: 45px; }
.g-d { width: 102px; padding-left: 22px; }
.g-d .big { width: 58px; }
.g-e { width: 88px; }
.g-f { width: 72px; }
.g-g { width: 98px; }
.g-e .tools, .g-f .tools { justify-content: center; }
.g-g .tools { padding-left: 12px; }

.combos { display: flex; gap: 5px; height: 33px; padding: 3px; background: #f0f0f0; }
.combos select { width: 123px; height: 28px; padding: 0 4px; appearance: none; border: 1px solid #ddd; border-radius: 4px; background: #fff url("data:image/svg+xml,%3Csvg xmlns='http://www.w3.org/2000/svg' width='8' height='8'%3E%3Cpath d='M1 2h6L4 6z' fill='%23555'/%3E%3C/svg%3E") no-repeat right 5px center; }

/* workspace */
.work { flex: 1; min-height: 0; display: flex; background: #fff; }
.panel { display: flex; flex-direction: column; border: 1px solid #d4d4d4; border-top: 0; min-height: 0; background: #fff; }
.strip { flex: none; display: flex; justify-content: flex-end; height: 15px; background: #e8e8e8; border-bottom: 1px solid #dcdcdc; }
.strip button { width: 18px; font-size: 18px; line-height: 14px; color: #888; }
.panel > h2 { flex: none; height: 28px; line-height: 27px; padding-left: 10px; color: #808080; background: #f1f1f1; border-bottom: 1px solid #ddd; }
.nav { width: 203px; margin-right: 5px; }
.navtools { flex: none; display: flex; align-items: center; gap: 5px; height: 35px; padding-left: 2px; border-bottom: 1px solid #d8d8d8; }
.navtools button { width: 30px; height: 27px; border-radius: 4px; }
.navtools .on { background: #c3daf3; }
.navtools svg { width: 20px; height: 20px; }
.navlist { position: relative; flex: 1; min-height: 0; overflow: hidden; padding: 5px 18px 0 0; }
.navlist a, .navlist h3 { display: flex; align-items: center; height: 31px; margin-bottom: 4px; line-height: 18px; padding-bottom: 1px; }
.navlist a { padding-left: 20px; gap: 17px; position: relative; }
.navlist a svg { width: 24px; height: 24px; }
.navlist .on { background: #d3e7fe; }
.navlist h3 { padding-left: 4px; background: #ececec; }
.dot { align-self: flex-start; width: 8px; height: 8px; margin-top: 2px; border-radius: 50%; background: #f00; }
.navlist .new { gap: 5px; }
.new .dot { margin-right: -1px; margin-top: 0; }
.thumb { position: absolute; width: 10px; border-radius: 5px; background: #ccc; }
.navlist .thumb { right: 4px; bottom: 29px; height: 215px; }

.mid { display: flex; flex-direction: column; width: 360px; min-height: 0; }
.comp { height: 397px; margin-bottom: 5px; }
.prop { flex: 1; }
.tabs { flex: none; display: flex; height: 28px; background: #f1f1f1; border-bottom: 1px solid #ddd; }
.tabs button { width: 81px; color: #909090; background: #dedede; border: 1px solid #c9c9c9; border-width: 0 1px 0 0; }
.tabs .on { color: #222; background: #efefef; font-weight: 500; }
.comptools { flex: none; display: flex; align-items: center; gap: 15px; height: 35px; padding: 2px 0 0 4px; overflow: hidden; border-bottom: 1px solid #e0e0e0; }
.comptools button { gap: 5px; }
.comptools svg { width: 20px; height: 20px; }
.comptools .tiny { width: 7px; margin-left: 2px; }
.find { flex: none; height: 24px; padding: 0 2px; border: 0; border-bottom: 1px solid #d8d8d8; }
.find::placeholder { color: #999; }
.tree { padding-top: 4px; }
.tree li { display: flex; align-items: center; gap: 8px; height: 30px; }
.t1 { padding-left: 16px; }
.t2 { padding-left: 41px; }
.t3 { padding-left: 75px; }
.t3 span { padding: 3px 5px; background: #c3daf3; border-radius: 3px; }
.propwrap { flex: 1; min-height: 0; overflow: hidden; }
.prop table { width: 100%; table-layout: fixed; border-collapse: collapse; }
.c1 { width: 27px; }
.c2 { width: 126px; }
.prop th, .prop td { height: 26px; padding: 0 4px; border: 1px solid #dcdcdc; border-left: 0; font-weight: 400; white-space: nowrap; overflow: hidden; line-height: 20px; }
.prop thead th { border-top: 0; background: #fff; }
.prop thead th:last-child { padding-left: 0; }
.prop tbody th { padding: 0; background: #f1f1f1; }
.prop tr:nth-child(5n) td, .dt tr:nth-child(5n) td { height: 27px; }
.prop .k { color: #1f5eff; }
.prop td svg { width: 14px; height: 14px; vertical-align: 0; }

.canvas { position: relative; flex: 1; background: #000; overflow: hidden; }
.drawing { position: absolute; right: 0; top: 0; width: 137px; height: 774px; }
.cmdline { position: absolute; left: 0; right: 0; bottom: 0; height: 33px; background: rgba(64, 64, 64, .65); }
.viewbar { position: absolute; right: 15px; top: 1px; display: flex; flex-direction: column; align-items: center; width: 41px; height: 307px; padding-top: 9px; background: #fff; border: 1px solid #ccc; }
.viewbar button { width: 36px; height: 36px; flex: none; position: relative; }
.viewbar button svg { width: 25px; height: 25px; }
.viewbar > .tiny { width: 8px; height: 8px; margin: 3px 0 2px; }
.viewbar hr { width: 28px; margin: 2px 0; border: 0; border-top: 1px solid #777; }
.viewbar .on { background: #d5e7fb; border: 1px solid #5a92dc; }
.v3d b { position: absolute; left: 8px; top: 14px; font-size: 10px; line-height: 14px; color: #1f78e8; }
.splitter { width: 5px; display: flex; align-items: center; }
.splitter i { width: 4px; height: 126px; background: #626c78; }

.disp { width: 348px; }
.ptabs { flex: none; display: flex; align-items: flex-end; border-bottom: 1px solid #d0d3d7; }
.ptabs button { height: 26px; padding: 0 8px; margin-right: 5px; background: #dedede; border-radius: 4px 4px 0 0; }
.ptabs .on { height: 30px; margin-bottom: -1px; padding: 0 7px; background: #fff; color: #2c83e8; border: 1px solid #c9cdd2; border-bottom: 0; }
.disp .ptabs { height: 33px; padding-left: 2px; }
.floors { flex: none; display: flex; align-items: center; height: 37px; padding-left: 8px; gap: 25px; color: #111; }
label { display: flex; align-items: center; }
.floors label { gap: 9px; }
.ftree { flex: 1; border: 1px solid #ccd1d6; padding: 3px 0 0 13px; color: #909090; }
.ftree label { height: 30px; gap: 8px; padding-left: 42px; }
.ftree .root { padding-left: 0; }
.other { height: 48px; gap: 3px; padding-left: 1px; }
input[type=radio], input[type=checkbox] { position: relative; flex: none; appearance: none; width: 18px; height: 18px; border: 1px solid #8a8a8a; background: #fff; border-radius: 2px; }
input[type=radio] { border-radius: 50%; }
input[type=radio]:checked::after { content: ""; position: absolute; left: 4px; top: 4px; width: 8px; height: 8px; border-radius: 50%; background: #1f78e8; }
input[type=checkbox]:disabled { background: #f0f0f0; border-color: #b0b0b0; }
input[type=checkbox]:checked:enabled { background: #2c80e4; border-color: #2c80e4; }
input[type=checkbox]:checked::after { content: ""; position: absolute; left: 5px; top: 1px; width: 6px; height: 11px; border: solid #fff; border-width: 0 2px 2px 0; transform: rotate(40deg); }
input[type=checkbox]:checked:disabled::after { border-color: #a0a0a0; }
.part { box-shadow: inset 0 0 0 2px #f0f0f0, inset 0 0 0 3px #ccc; }

.status { display: flex; align-items: center; height: 39px; padding-left: 2px; background: #fcfcfc; white-space: nowrap; }
.v1 { margin: 0 32px 0 6px; }
.v2 { width: 74px; margin: 0 50px 0 6px; }
.v3 { width: 62px; }
.v4 { width: 63px; }
.snap { display: flex; gap: 6px; padding-bottom: 2px; }
.snap button { width: 30px; height: 30px; border: 1px solid #888; border-radius: 4px; gap: 8px; }
.snap .w { width: 45px; }
.snap .on { background: #b9d2f2; border: 2px solid #3a7fd8; }
.snap .off { opacity: .6; }
.snap svg { width: 19px; height: 19px; }
.snap .tiny { width: 8px; }

/* quantity dialog */
.dialog { position: absolute; z-index: 3; left: 492px; top: 74px; width: 938px; height: 911px; display: flex; flex-direction: column; padding: 0 14px 8px; border: 1px solid #b5b5b5; border-radius: 9px; background: rgba(253, 253, 253, .9); backdrop-filter: blur(12px); box-shadow: 0 14px 44px rgba(0, 0, 0, .5); }
.dtitle { display: flex; height: 34px; align-items: center; padding-top: 11px; }
.dtitle h2 { flex: 1; font-size: 17px; line-height: 24px; }
.dtitle button { width: 35px; height: 24px; }
.dtitle button:last-child { margin-right: -10px; }
.dtitle svg { width: 15px; height: 15px; }
.dtabs { height: 32px; }
.dtabs .on { height: 32px; }
.dbody { flex: 1; min-height: 0; display: flex; flex-direction: column; padding-top: 12px; background: #fff; border: 1px solid #c9cdd2; border-top: 0; }
.qty { height: 382px; border: 1px solid #cfcfcf; border-left: 0; border-radius: 4px 4px 0 0; }
.opts { display: flex; align-items: center; height: 29px; padding: 0 0 9px 9px; gap: 10px; color: #111; }
.opts label { gap: 5px; }
.opts .t { gap: 3px; color: #333; }
.opts .dis { color: #999; }
.qt { width: 771px; table-layout: fixed; border-collapse: collapse; color: #111; }
.gut { width: 9px; }
.qt td, .qt th { height: 24px; padding: 0; border: 1px solid #111; text-align: center; line-height: 18px; }
.qt .no { border: 1px solid #ccc; border-right-color: #111; background: #f1f1f1; color: #777; line-height: 20px; font-size: 14px; }
.qt .r1 > * { height: 23px; }
.qt .r2 > td { height: 76px; }
.qt td.n { padding-right: 3px; text-align: right; font: 13px/18px "Liberation Mono", monospace; }
.qt .bold td { font-weight: 700; }
.qt .bold td.n { font-size: 14px; }
.qt .bold td.no { font-weight: 400; }
.qt .sum td { background: #e2e2e2; }
.dsplit { height: 18px; border-top: 7px solid #efefef; }
.detail { flex: 1; min-height: 0; display: flex; flex-direction: column; border: 1px solid #cfcfcf; border-left: 0; border-radius: 4px 4px 0 0; }
.detail h3 { height: 29px; line-height: 22px; }
.dwrap { position: relative; flex: 1; min-height: 0; overflow: hidden; border-top: 1px solid #cfcfcf; padding-left: 2px; }
.dwrap .thumb { right: 4px; top: 18px; height: 179px; }
.dt { width: 320px; table-layout: fixed; border-collapse: collapse; border-right: 2px solid #777; background: #d5e9ff; }
.a { width: 17px; }
.b1 { width: 101px; }
.dt td, .dt th { height: 26px; padding: 0 0 0 4px; line-height: 20px; white-space: nowrap; border: 1px solid #d6d6d8; border-left: 0; text-align: left; }
.dt td:last-child { padding-left: 5px; }
.dt th { padding: 0; text-align: center; color: #fff; background: #80bafa; border-color: #6aaaf2; }
.dt .hd td { background: #f0f0f0; }
.dfoot { display: flex; gap: 7px; height: 41px; padding: 9px 6px 0 7px; }
.dfoot button { width: 175px; height: 32px; background: #fff; border: 1px solid #c9c9c9; border-radius: 4px; }
.dfoot .pri { width: 100px; margin-left: auto; background: #2c80e4; border-color: #2c80e4; color: #fff; }
.grip { position: absolute; right: 2px; bottom: 2px; width: 12px; height: 12px; }

/* taskbar */
.taskbar { position: relative; z-index: 4; display: grid; grid-template-columns: 1fr auto 1fr; height: 60px; background: #2f2214; color: #fff; font-size: 14px; }
.weather { display: flex; gap: 7px; align-items: center; padding-left: 25px; }
.weather svg { width: 34px; height: 38px; }
.weather span { color: #d0ccc8; }
.apps { display: flex; }
.app-b { position: relative; width: 55px; height: 60px; }
.app-b svg { width: 30px; height: 30px; }
.run::after, .cur::after { content: ""; position: absolute; bottom: 6px; left: 24px; width: 7px; height: 4px; border-radius: 2px; background: #9a938b; }
.cur::after { left: 18px; width: 20px; background: #4cc2ff; }
.cur::before { content: ""; position: absolute; z-index: -1; inset: 5px 2px; border-radius: 5px; background: #423629; }
.tsearch { width: 125px; height: 40px; margin: 10px 4px; border-radius: 20px; background: #3c3024; border: 1px solid #44382c; gap: 6px; font-size: 15px; }
.tsearch svg { width: 17px; height: 17px; }
.tray { display: flex; align-items: center; justify-content: flex-end; padding-right: 25px; }
.tray svg { width: 20px; height: 20px; }
.ime { margin: 0 30px 0 17px; font-size: 16px; }
.tray .sogou { margin-right: 32px; }
.sys { display: flex; gap: 8px; margin-right: 19px; }
.clock { text-align: right; }
.badge { width: 20px; height: 20px; margin-left: 10px; border-radius: 50%; background: #4cc2ff; color: #222; font-weight: 400; text-align: center; }
```
